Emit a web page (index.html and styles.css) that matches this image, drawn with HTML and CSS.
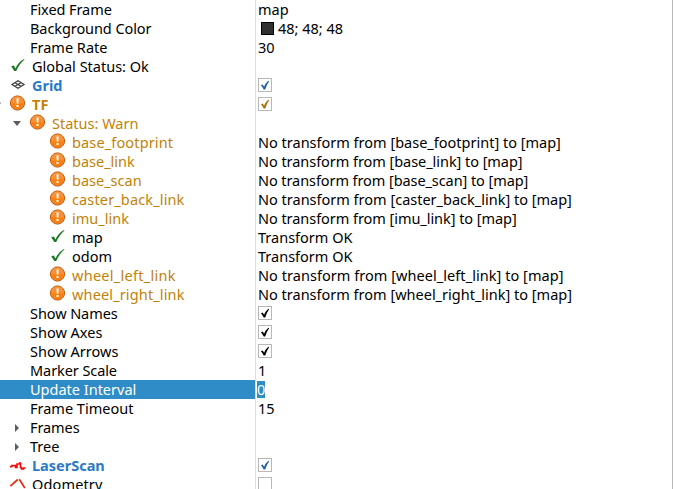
FILE: index.html
```html
<!DOCTYPE html>
<html lang="en">
<head>
<meta charset="utf-8">
<title>Displays</title>
<link rel="stylesheet" href="styles.css">
</head>
<body>
<svg class="defs" width="0" height="0" aria-hidden="true">
  <defs>
    <radialGradient id="orange" cx=".5" cy=".55" r=".6"><stop offset="0" stop-color="#ff7f00"/><stop offset=".6" stop-color="#f97f18"/><stop offset="1" stop-color="#ffa95a"/></radialGradient>
    <symbol id="warn" viewBox="0 0 16 16"><circle cx="7.500" cy="8" r="7.100" fill="url(#orange)" stroke="#c05a10" stroke-width="1"/><path d="M1.500 8a6 6 0 0 1 12 0Q7.500 9 1.500 8Z" fill="#fff" opacity=".12"/><path d="M6.500 3.500h2.200l-.3 5.200H6.800ZM6.500 10h2.100v2H6.500Z" fill="#fff"/></symbol>
    <symbol id="ok" viewBox="0 0 16 16"><path d="M1.200 9.200 3.900 8.500l1.500 3C7.400 7.500 10 4.100 14 2l.5.5C10.800 5.500 8.300 9.500 6.200 14H4.300Z" fill="#1c7a24"/></symbol>
    <symbol id="tick" viewBox="0 0 14 14"><path d="M2.900 7.300 4.700 6.400 6.100 8.800Q7.300 5.300 10.300 2.700L11.100 3.200Q8.600 6.800 7.200 11.600H5.700Q4.700 9.200 2.900 7.300Z" fill="currentColor"/></symbol>
  </defs>
</svg>
<main class="tree">
  <div class="row"><div class="name"><span class="tight">Fixed Frame</span></div><div class="value"><span>map</span></div></div>
  <div class="row"><div class="name"><span class="tight">Background Color</span></div><div class="value"><i class="swatch"></i><span>48; 48; 48</span></div></div>
  <div class="row"><div class="name"><span>Frame Rate</span></div><div class="value"><span>30</span></div></div>
  <div class="row"><div class="name top"><svg class="icon"><use href="#ok"/></svg><span>Global Status: Ok</span></div><div class="value"></div></div>
  <div class="row"><div class="name top blue"><svg class="icon" viewBox="0 0 16 16"><path d="M2 8.500 8 4.800 14 8.500 8 12.200ZM5 6.650l6 3.700M11 6.650l-6 3.700" fill="none" stroke="#3c3c3c" stroke-width="1.200"/></svg><span>Grid</span></div><div class="value"><i class="box dark-blue"><svg><use href="#tick"/></svg></i></div></div>
  <div class="row"><div class="name top gold bold"><i class="edge"></i><svg class="icon"><use href="#warn"/></svg><span class="wide">TF</span></div><div class="value"><i class="box dark-gold"><svg><use href="#tick"/></svg></i></div></div>
  <div class="row"><div class="name branch gold"><i class="down"></i><svg class="icon"><use href="#warn"/></svg><span>Status: Warn</span></div><div class="value"></div></div>
  <div class="row"><div class="name leaf gold"><svg class="icon"><use href="#warn"/></svg><span class="wide">base_footprint</span></div><div class="value"><span>No transform from [base_footprint] to [map]</span></div></div>
  <div class="row"><div class="name leaf gold"><svg class="icon"><use href="#warn"/></svg><span>base_link</span></div><div class="value"><span class="snug">No transform from [base_link] to [map]</span></div></div>
  <div class="row"><div class="name leaf gold"><svg class="icon"><use href="#warn"/></svg><span>base_scan</span></div><div class="value"><span class="tight">No transform from [base_scan] to [map]</span></div></div>
  <div class="row"><div class="name leaf gold"><svg class="icon"><use href="#warn"/></svg><span class="wide">caster_back_link</span></div><div class="value"><span>No transform from [caster_back_link] to [map]</span></div></div>
  <div class="row"><div class="name leaf gold"><svg class="icon"><use href="#warn"/></svg><span>imu_link</span></div><div class="value"><span class="snug">No transform from [imu_link] to [map]</span></div></div>
  <div class="row"><div class="name leaf"><svg class="icon"><use href="#ok"/></svg><span>map</span></div><div class="value"><span>Transform OK</span></div></div>
  <div class="row"><div class="name leaf"><svg class="icon"><use href="#ok"/></svg><span>odom</span></div><div class="value"><span>Transform OK</span></div></div>
  <div class="row"><div class="name leaf gold"><svg class="icon"><use href="#warn"/></svg><span class="wider">wheel_left_link</span></div><div class="value"><span class="loose">No transform from [wheel_left_link] to [map]</span></div></div>
  <div class="row"><div class="name leaf gold"><svg class="icon"><use href="#warn"/></svg><span class="wide">wheel_right_link</span></div><div class="value"><span>No transform from [wheel_right_link] to [map]</span></div></div>
  <div class="row"><div class="name"><span class="tight">Show Names</span></div><div class="value"><i class="box"><svg><use href="#tick"/></svg></i></div></div>
  <div class="row"><div class="name"><span>Show Axes</span></div><div class="value"><i class="box"><svg><use href="#tick"/></svg></i></div></div>
  <div class="row"><div class="name"><span>Show Arrows</span></div><div class="value"><i class="box"><svg><use href="#tick"/></svg></i></div></div>
  <div class="row"><div class="name"><span class="tight">Marker Scale</span></div><div class="value"><span>1</span></div></div>
  <div class="row selected"><div class="name"><span>Update Interval</span></div><div class="value"><span class="edit">0</span></div></div>
  <div class="row"><div class="name"><span>Frame Timeout</span></div><div class="value"><span>15</span></div></div>
  <div class="row"><div class="name closed"><i class="right"></i><span class="tight">Frames</span></div><div class="value"></div></div>
  <div class="row"><div class="name closed"><i class="right"></i><span>Tree</span></div><div class="value"></div></div>
  <div class="row"><div class="name top blue"><svg class="icon" viewBox="0 0 16 16"><path d="M.5 11.500V10.500H2V9.500H5.500V11.500H7V8H9.800V7H10.500V11.500H11.500V13H13.500V12H15.500" fill="none" stroke="#f00" stroke-width="1.500"/></svg><span>LaserScan</span></div><div class="value"><i class="box dark-blue"><svg><use href="#tick"/></svg></i></div></div>
  <div class="row"><div class="name top"><svg class="icon" viewBox="0 0 16 16"><path d="M.3 11 7.800 4.500M9.300 4.200 14.800 13" fill="none" stroke="#e42b12" stroke-width="1.700"/></svg><span class="wide">Odometry</span></div><div class="value"><i class="box"></i></div></div>
</main>
</body>
</html>
```
FILE: styles.css
```css
* { box-sizing: border-box; }
body { margin: 0; width: 673px; height: 489px; overflow: hidden; background: #fff; color: #000; font: 14.5px/19px "Noto Sans", sans-serif; }
.defs { display: block; width: 0; height: 0; }
.tree { height: 489px; overflow: hidden; border-right: 1px solid #b8b8b8; }
.row { display: flex; height: 19px; white-space: pre; }
.name { display: flex; width: 256px; padding-left: 30px; border-right: 1px solid #dcdcdc; }
.value { display: flex; flex: 1; padding-left: 2px; }
.top { padding-left: 10px; position: relative; }
.branch { padding-left: 13px; }
.leaf { padding-left: 50px; }
.closed { padding-left: 15px; }
.icon { width: 16px; height: 16px; flex: none; margin-right: 6px; }
.blue { color: #2b7ac6; }
.dark-blue { color: #1f60a5; }
.dark-gold { color: #a76d00; }
.top.blue, .bold { font-weight: 700; }
.gold { color: #c38207; }
.tight { letter-spacing: -.08px; }
.snug { letter-spacing: -.05px; }
.loose { letter-spacing: .05px; }
.wide { letter-spacing: .14px; }
.wider { letter-spacing: .27px; }
.edge { position: absolute; left: 0; top: 7px; width: 1px; height: 2px; background: #bbb; }
.down { width: 8px; height: 5px; margin: 7px 9px 0 0; background: #5c5c5c; clip-path: polygon(0 0, 100% 0, 50% 100%); }
.right { width: 4px; height: 8px; margin: 6px 11px 0 0; background: #5c5c5c; clip-path: polygon(0 0, 100% 50%, 0 100%); }
.swatch { width: 13px; height: 13px; margin: 3px 4px 0 3px; border: 1px solid #000; background: #303030; }
.box { width: 14px; height: 14px; margin-top: 2px; border: 1px solid #b8b8b8; }
.box svg { display: block; width: 14px; height: 14px; margin: -1px; }
.selected .name { background: #308cc6; color: #fff; }
.edit { height: 17px; margin: 1px 0 0 -1px; line-height: 17px; background: #308cc6; color: #fff; }
```
